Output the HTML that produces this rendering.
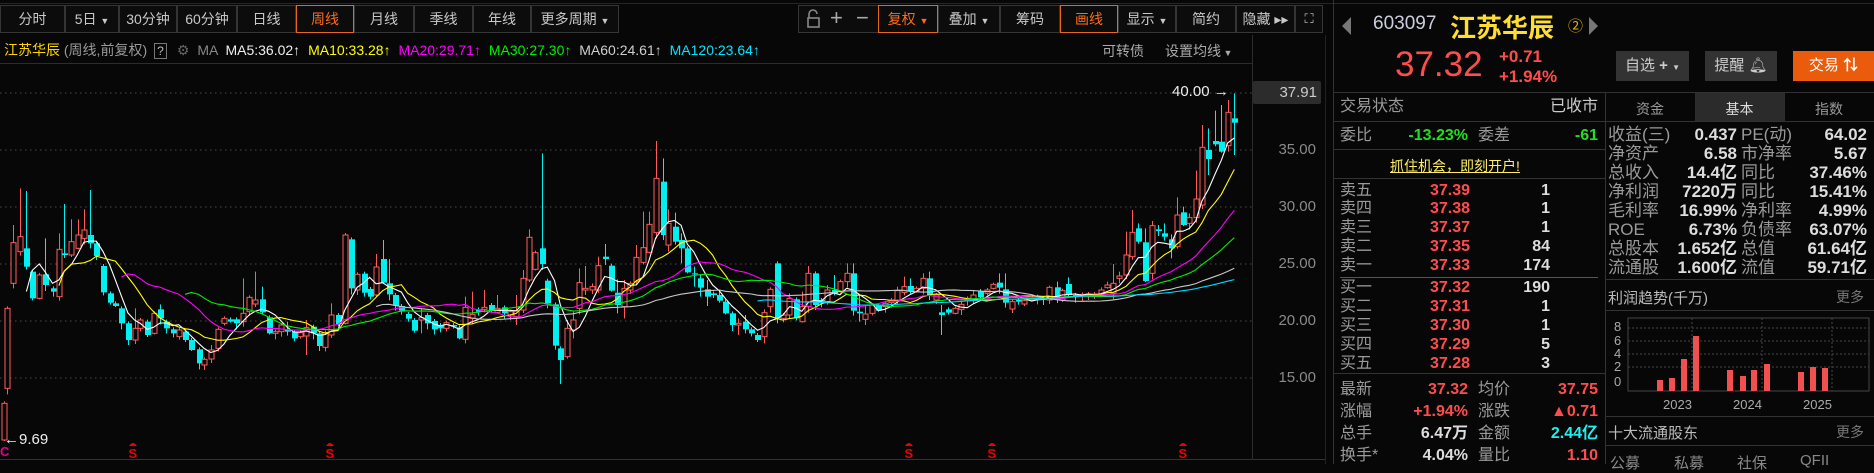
<!DOCTYPE html>
<html><head><meta charset="utf-8">
<style>
*{margin:0;padding:0;box-sizing:border-box}
body{width:1874px;height:464px;background:#070707;overflow:hidden;position:relative;font-family:"Liberation Sans","Noto Sans CJK SC",sans-serif;color:#bbb}
.a{position:absolute;white-space:nowrap}
.btn{position:absolute;top:5px;height:28px;border:1px solid #353535;color:#c8c8c8;font-size:14px;line-height:26px;text-align:center;background:#0c0c0c}
.on{border-color:#e8671d;color:#ff6a1a}
.l{color:#9a9a9a;font-size:16px;line-height:20px}
.r{color:#ff4d4d;font-size:16px;font-weight:bold;text-align:right;line-height:20px}
.w{color:#ddd;font-size:16px;font-weight:bold;text-align:right;line-height:20px}
.hl{position:absolute;height:1px;background:#2c2c2c}
.vl{position:absolute;width:1px;background:#2c2c2c}
</style></head><body>
<div class="hl" style="left:0;top:3px;width:1874px;background:#262626"></div>
<!-- toolbar -->
<div class="btn" style="left:0;width:65px">分时</div>
<div class="btn" style="left:65px;width:54px">5日 <span style="font-size:9px">▼</span></div>
<div class="btn" style="left:119px;width:58px">30分钟</div>
<div class="btn" style="left:177px;width:60px">60分钟</div>
<div class="btn" style="left:237px;width:59px">日线</div>
<div class="btn on" style="left:296px;width:58px">周线</div>
<div class="btn" style="left:354px;width:60px">月线</div>
<div class="btn" style="left:414px;width:59px">季线</div>
<div class="btn" style="left:473px;width:58px">年线</div>
<div class="btn" style="left:531px;width:88px">更多周期 <span style="font-size:9px">▼</span></div>
<div class="btn" style="left:798px;width:80px;border-right:none"></div>
<svg class="a" style="left:804px;top:9px" width="20" height="20" viewBox="0 0 20 20"><path d="M5 9V5a4 4 0 0 1 8 0" fill="none" stroke="#888" stroke-width="1.6"/><rect x="4" y="9" width="11" height="9" fill="none" stroke="#888" stroke-width="1.6"/></svg>
<div class="a" style="left:830px;top:5px;font-size:22px;color:#aaa">+</div>
<div class="a" style="left:856px;top:5px;font-size:22px;color:#aaa">−</div>
<div class="btn on" style="left:878px;width:60px">复权 <span style="font-size:9px">▼</span></div>
<div class="btn" style="left:938px;width:62px">叠加 <span style="font-size:9px">▼</span></div>
<div class="btn" style="left:1000px;width:60px">筹码</div>
<div class="btn on" style="left:1060px;width:58px">画线</div>
<div class="btn" style="left:1118px;width:58px">显示 <span style="font-size:9px">▼</span></div>
<div class="btn" style="left:1176px;width:60px">简约</div>
<div class="btn" style="left:1236px;width:59px">隐藏 ▸▸</div>
<div class="btn" style="left:1295px;width:28px;font-size:13px">⛶</div>
<!-- info row -->
<div class="a" style="left:4px;top:41px;font-size:14px;line-height:18px">
<span style="color:#ffd700">江苏华辰</span> <span style="color:#999">(周线,前复权)</span>
<span style="display:inline-block;border:1px solid #777;color:#bbb;width:13px;height:16px;text-align:center;font-size:12px;line-height:14px;margin-left:3px">?</span>
<span style="color:#666;margin-left:6px">⚙</span> <span style="color:#888;margin-left:4px">MA</span>
<span style="color:#eee;margin-left:4px">MA5:36.02↑</span>
<span style="color:#ffff00;margin-left:4px">MA10:33.28↑</span>
<span style="color:#ff00ff;margin-left:4px">MA20:29.71↑</span>
<span style="color:#00ee00;margin-left:4px">MA30:27.30↑</span>
<span style="color:#cfcfcf;margin-left:4px">MA60:24.61↑</span>
<span style="color:#00e5ff;margin-left:4px">MA120:23.64↑</span>
</div>
<div class="a" style="left:1102px;top:41px;font-size:14px;color:#aaa">可转债</div>
<div class="a" style="left:1165px;top:41px;font-size:14px;color:#aaa">设置均线<span style="font-size:9px"> ▼</span></div>
<div class="hl" style="left:0;top:63px;width:1252px"></div>
<div class="hl" style="left:0;top:459px;width:1325px;background:#333"></div>
<div class="vl" style="left:1252px;top:35px;height:425px"></div>
<div class="vl" style="left:1325px;top:35px;height:429px;background:#222"></div>
<div class="vl" style="left:1333px;top:0;height:464px;background:#333"></div>
<!-- price axis -->
<div class="a" style="left:1262px;top:84px;font-size:15px;color:#8a8a8a;width:54px;text-align:right">40.00</div>
<div class="a" style="left:1262px;top:141px;font-size:15px;color:#8a8a8a;width:54px;text-align:right">35.00</div>
<div class="a" style="left:1262px;top:198px;font-size:15px;color:#8a8a8a;width:54px;text-align:right">30.00</div>
<div class="a" style="left:1262px;top:255px;font-size:15px;color:#8a8a8a;width:54px;text-align:right">25.00</div>
<div class="a" style="left:1262px;top:312px;font-size:15px;color:#8a8a8a;width:54px;text-align:right">20.00</div>
<div class="a" style="left:1262px;top:369px;font-size:15px;color:#8a8a8a;width:54px;text-align:right">15.00</div>
<div class="a" style="left:1253px;top:81px;width:68px;height:23px;background:#2c2c2c;border-radius:2px;color:#ccc;font-size:15px;line-height:23px;text-align:right;padding-right:4px">37.91</div>
<svg id="ch" class="a" style="left:0;top:0" width="1252" height="464"></svg>
<div class="a" style="left:1172px;top:83px;font-size:15px;color:#eee">40.00 →</div>
<div class="a" style="left:4px;top:431px;font-size:15px;color:#eee">←9.69</div>
<div class="a" style="left:0;top:444px;font-size:13px;color:#e0008a;font-weight:bold">C</div>
<!-- right panel -->
<div class="a" style="left:1342px;top:17px;width:0;height:0;border-top:9px solid transparent;border-bottom:9px solid transparent;border-right:9px solid #777"></div>
<div class="a" style="left:1373px;top:13px;font-size:19px;color:#ccd">603097</div>
<div class="a" style="left:1450px;top:8px;font-size:26px;color:#ffdd33;font-weight:bold">江苏华辰</div>
<div class="a" style="left:1568px;top:15px;font-size:15px;color:#e8b000">②</div>
<div class="a" style="left:1589px;top:17px;width:0;height:0;border-top:9px solid transparent;border-bottom:9px solid transparent;border-left:9px solid #777"></div>
<div class="a" style="left:1395px;top:45px;font-size:35px;color:#ff4d4d">37.32</div>
<div class="a" style="left:1499px;top:47px;font-size:17px;color:#ff4d4d;font-weight:bold">+0.71</div>
<div class="a" style="left:1499px;top:67px;font-size:17px;color:#ff4d4d;font-weight:bold">+1.94%</div>
<div class="a" style="left:1616px;top:51px;width:73px;height:30px;background:#333;color:#ccc;font-size:15px;line-height:30px;text-align:center">自选 <b>+</b> <span style="font-size:8px">▼</span></div>
<div class="a" style="left:1705px;top:51px;width:72px;height:30px;background:#333;color:#ccc;font-size:15px;line-height:30px;text-align:center">提醒 🔔︎</div>
<div class="a" style="left:1793px;top:51px;width:81px;height:30px;background:#ea5b0c;color:#fff;font-size:15px;line-height:30px;text-align:center">交易 <b>⇅</b></div>
<div class="hl" style="left:1333px;top:92px;width:541px;background:#333"></div>
<div class="a l" style="left:1340px;top:97px">交易状态</div>
<div class="a" style="left:1540px;top:97px;width:58px;text-align:right;font-size:16px;line-height:20px;color:#ccc">已收市</div>
<div class="vl" style="left:1605px;top:92px;height:372px;background:#333"></div>
<div class="a" style="left:1695px;top:93px;width:89px;height:28px;background:#2b2b2b"></div>
<div class="a" style="left:1605px;top:99px;width:90px;text-align:center;font-size:14px;color:#999">资金</div>
<div class="a" style="left:1695px;top:99px;width:89px;text-align:center;font-size:14px;color:#ddd">基本</div>
<div class="a" style="left:1784px;top:99px;width:90px;text-align:center;font-size:14px;color:#999">指数</div>
<div class="vl" style="left:1695px;top:93px;height:28px"></div><div class="vl" style="left:1784px;top:93px;height:28px"></div>
<div class="hl" style="left:1333px;top:121px;width:541px;background:#333"></div>
<div class="a l" style="left:1340px;top:126px">委比</div>
<div class="a" style="left:1400px;top:126px;width:68px;text-align:right;font-size:16px;line-height:20px;font-weight:bold;color:#22dd22">-13.23%</div>
<div class="a l" style="left:1478px;top:126px">委差</div>
<div class="a" style="left:1540px;top:126px;width:58px;text-align:right;font-size:16px;line-height:20px;font-weight:bold;color:#22dd22">-61</div>
<div class="hl" style="left:1333px;top:149px;width:272px;background:#333"></div>
<div class="a" style="left:1390px;top:156px;font-size:14px;color:#ffee66;text-decoration:underline">抓住机会，即刻开户!</div>
<div class="hl" style="left:1333px;top:178px;width:272px;background:#333"></div>
<div id="ob"></div>
<div class="hl" style="left:1340px;top:277px;width:258px;background:#555"></div>
<div class="hl" style="left:1333px;top:373px;width:272px;background:#333"></div>
<div class="a l" style="left:1340px;top:380px">最新</div><div class="a r" style="left:1400px;top:380px;width:68px">37.32</div>
<div class="a l" style="left:1478px;top:380px">均价</div><div class="a r" style="left:1530px;top:380px;width:68px">37.75</div>
<div class="a l" style="left:1340px;top:402px">涨幅</div><div class="a r" style="left:1400px;top:402px;width:68px">+1.94%</div>
<div class="a l" style="left:1478px;top:402px">涨跌</div><div class="a r" style="left:1530px;top:402px;width:68px">▲0.71</div>
<div class="a l" style="left:1340px;top:424px">总手</div><div class="a w" style="left:1400px;top:424px;width:68px">6.47万</div>
<div class="a l" style="left:1478px;top:424px">金额</div><div class="a w" style="left:1530px;top:424px;width:68px;color:#22eeee">2.44亿</div>
<div class="a l" style="left:1340px;top:446px">换手*</div><div class="a w" style="left:1400px;top:446px;width:68px">4.04%</div>
<div class="a l" style="left:1478px;top:446px">量比</div><div class="a r" style="left:1530px;top:446px;width:68px">1.10</div>
<div id="fd"></div>
<div class="hl" style="left:1605px;top:279px;width:269px;background:#333"></div>
<div class="a" style="left:1608px;top:287px;font-size:15px;color:#bbb">利润趋势(千万)</div>
<div class="a" style="left:1836px;top:287px;font-size:14px;color:#777">更多</div>
<div class="hl" style="left:1605px;top:310px;width:269px;background:#333"></div>
<svg class="a" style="left:1605px;top:310px" width="269" height="106">
<g fill="#aaa" font-size="13" font-family="Liberation Sans">
<text x="9" y="21">8</text><text x="9" y="35">6</text><text x="9" y="48">4</text><text x="9" y="61">2</text><text x="9" y="76">0</text>
<text x="58" y="99">2023</text><text x="128" y="99">2024</text><text x="198" y="99">2025</text></g>
<g stroke="#444" stroke-dasharray="2,2"><line x1="23" y1="18" x2="264" y2="18"/><line x1="23" y1="31" x2="264" y2="31"/><line x1="23" y1="44" x2="264" y2="44"/><line x1="23" y1="57" x2="264" y2="57"/><line x1="87" y1="8" x2="87" y2="81"/><line x1="157" y1="8" x2="157" y2="81"/><line x1="227" y1="8" x2="227" y2="81"/></g>
<rect x="23" y="8" width="241" height="73" fill="none" stroke="#444"/>
<g fill="#f05050"><rect x="52" y="70" width="6" height="11"/><rect x="64" y="68" width="6" height="13"/><rect x="76" y="49" width="6" height="32"/><rect x="88" y="26" width="6" height="55"/><rect x="122" y="60" width="6" height="21"/><rect x="135" y="66" width="6" height="15"/><rect x="146" y="60" width="6" height="21"/><rect x="159" y="54" width="6" height="27"/><rect x="193" y="62" width="6" height="19"/><rect x="205" y="57" width="6" height="24"/><rect x="217" y="58" width="6" height="23"/></g>
</svg>
<div class="hl" style="left:1605px;top:416px;width:269px;background:#333"></div>
<div class="a" style="left:1608px;top:422px;font-size:15px;color:#bbb">十大流通股东</div>
<div class="a" style="left:1836px;top:422px;font-size:14px;color:#777">更多</div>
<div class="hl" style="left:1605px;top:445px;width:269px;background:#333"></div>
<div class="a" style="left:1610px;top:452px;font-size:15px;color:#888;word-spacing:0">公募</div>
<div class="a" style="left:1674px;top:452px;font-size:15px;color:#888">私募</div>
<div class="a" style="left:1737px;top:452px;font-size:15px;color:#888">社保</div>
<div class="a" style="left:1800px;top:452px;font-size:15px;color:#888">QFII</div>
<script>
(function(){
var ob=[["卖五","37.39","1",191],["卖四","37.38","1",209],["卖三","37.37","1",228],["卖二","37.35","84",247],["卖一","37.33","174",266],["买一","37.32","190",288],["买二","37.31","1",307],["买三","37.30","1",326],["买四","37.29","5",345],["买五","37.28","3",364]];
var h="";ob.forEach(function(r){var t=r[3]-10;h+='<div class="a l" style="left:1340px;top:'+t+'px">'+r[0]+'</div><div class="a r" style="left:1400px;top:'+t+'px;width:70px">'+r[1]+'</div><div class="a w" style="left:1480px;top:'+t+'px;width:70px">'+r[2]+'</div>';});
document.getElementById("ob").innerHTML=h;
var fd=[["收益(三)","0.437","PE(动)","64.02"],["净资产","6.58","市净率","5.67"],["总收入","14.4亿","同比","37.46%"],["净利润","7220万","同比","15.41%"],["毛利率","16.99%","净利率","4.99%"],["ROE","6.73%","负债率","63.07%"],["总股本","1.652亿","总值","61.64亿"],["流通股","1.600亿","流值","59.71亿"]];
h="";fd.forEach(function(r,i){var t=125+i*19;h+='<div class="a l" style="left:1608px;top:'+t+'px;font-size:17px;line-height:20px">'+r[0]+'</div><div class="a w" style="left:1660px;top:'+t+'px;width:77px;font-size:17px;line-height:20px">'+r[1]+'</div><div class="a l" style="left:1741px;top:'+t+'px;font-size:17px;line-height:20px">'+r[2]+'</div><div class="a w" style="left:1790px;top:'+t+'px;width:77px;font-size:17px;line-height:20px">'+r[3]+'</div>';});
document.getElementById("fd").innerHTML=h;

var A=[[10,1030,1140,1],[20,745,985,1],[37,548,670,1,495],[55,530,575,1,385],[74,565,620,0,393],[90,635,715,0],[110,645,715,1],[127,643,675,0,535],[147,685,695,0],[165,568,710,1,520],[180,580,585,0,432],[200,545,585,1,478],[217,525,565,1,478],[235,510,535,1,448],[253,525,550,0,390],[270,550,588,0],[288,618,697,0],[307,700,728,0],[323,730,738,0],[340,745,790,0],[358,790,840,0],[377,805,840,1,745],[393,780,805,1],[412,785,825,0],[430,760,820,1],[448,748,775,0,733],[465,785,805,0],[483,808,820,0],[500,810,830,1],[518,815,840,0],[536,840,870,0],[556,868,910,0],[572,898,915,1],[590,870,897,1,855],[609,808,865,1],[627,775,790,1],[643,778,785,0],[661,778,790,0],[680,760,785,1,655],[698,712,755,1],[715,720,732,1,635],[733,718,757,0,680],[752,772,820,0],[770,815,820,1],[786,795,815,1],[803,810,815,0,785],[822,815,835,0],[840,818,830,1],[858,803,828,1,780,885],[875,800,820,0],[893,820,858,0],[911,818,862,1],[928,765,825,1,730],[946,765,792,0],[965,525,790,1],[982,538,685,0],[1000,643,690,1],[1018,641,698,0],[1035,687,710,0],[1053,621,705,1,582],[1071,597,668,0,540],[1089,670,703,0,597],[1106,705,737,0],[1124,738,752,0],[1141,762,776,0],[1160,780,812,0],[1178,773,780,1,745,820],[1196,765,790,0],[1214,783,808,0],[1232,795,805,0],[1250,788,805,1],[1267,795,800,0],[1285,802,835,0],[1303,742,838,1,710,850],[1321,763,775,1,695],[1338,748,755,0],[1356,742,748,1,690],[1374,735,752,0],[1391,745,757,1,705],[1410,742,760,0],[1428,755,765,1],[1445,752,770,1,705,795],[1463,655,750,1,630],[1480,532,660,1,508],[1498,578,628,1]];
var B=[[5,565,612,0,280],[20,662,730,0],[40,733,857,0],[56,865,900,0,0,972],[73,805,890,1,780],[91,780,810,1,755,835],[108,668,745,1,625],[125,685,690,1,618],[143,680,690,1,670],[160,617,690,1,590],[178,590,597,0,552,615],[196,617,692,0],[213,698,735,0,658,760],[230,685,740,1,660,775],[248,670,690,1],[265,592,665,1,555],[284,563,607,1,455],[300,493,577,1,455],[318,355,518,1,243],[337,365,525,0,295],[353,490,555,1,448,575],[370,500,545,0,458],[388,540,565,0,520,610],[405,565,637,0],[423,640,642,0,620,680],[441,655,683,0,645,710],[458,688,710,0,660,738],[475,700,705,0],[493,705,722,0,690],[510,725,760,0],[528,760,795,0],[545,790,795,1,775,825],[563,785,808,0,765],[581,808,820,0],[598,825,840,0],[615,758,830,1,748,850],[633,688,740,1],[651,610,775,0],[668,765,775,1],[686,715,765,1,700],[703,718,775,0],[720,740,785,1,695],[738,640,740,1,618],[755,640,735,0],[773,720,730,0],[790,690,725,1,675],[808,690,700,0,645],[825,665,695,1],[843,640,665,1,610],[860,640,752,0,610],[878,755,760,0,705,785],[895,762,778,1,735,795],[912,735,760,1],[930,735,752,0],[948,730,740,1],[965,720,728,1],[983,692,722,1,680],[1000,680,697,1,650],[1018,678,695,0,655],[1035,685,695,1],[1052,655,685,1,640],[1070,655,705,0,635],[1088,705,720,1],[1104,757,765,0,735,825],[1122,748,758,0],[1140,745,760,1],[1157,733,748,1,725,765],[1175,715,722,1],[1192,705,720,1,690],[1210,693,712,0],[1228,690,700,1],[1245,673,685,1,668],[1262,668,683,0,640]];
var C=[[15,628,668,0,580],[35,665,687,1],[55,660,665,0],[73,662,672,1],[95,655,660,1],[112,650,655,1],[130,655,660,0],[147,622,660,1,617],[170,622,660,0,605],[187,632,660,1],[205,612,645,0,592],[225,645,650,0],[245,643,648,1],[263,642,648,1],[283,642,648,1],[302,630,643,1,622],[322,615,623,1,605],[340,610,640,1,552],[358,588,595,1,575],[378,525,585,1,455],[397,457,530,1,390],[415,445,485,0,430],[436,487,603,0,445],[455,437,580,1,423],[473,448,453,0,435],[493,460,470,0,430],[512,478,505,0,463,535],[530,405,500,1,352],[549,397,435,0,380],[568,413,430,1,400],[587,357,413,1,272],[606,202,375,1,135],[625,210,237,0,145,285],[646,183,193,0,92],[664,185,215,0,75],[683,97,197,1,60],[703,115,128,0,40,225]];
var K=[];
function add(arr,fx,fy){arr.forEach(function(d){var o={x:fx(d[0]),t:fy(d[1]),b:fy(d[2]),c:d[3],h:d[4]?fy(d[4]):null,l:d[5]?fy(d[5]):null};K.push(o);});}
add(A,function(z){return z/2.8},function(z){return 60+z/3});
add(B,function(z){return 540+z/2.75},function(z){return 60+z/3});
add(C,function(z){return 1000+z/3},function(z){return 80+z/3});
var s='';
[93,150,207,264,321,378].forEach(function(y){s+='<line x1="0" y1="'+y+'" x2="1252" y2="'+y+'" stroke="#4a4a4a" stroke-dasharray="1.5,3.5"/>';});
var RED="#ff5b5b",CY="#00f0f0";
K.forEach(function(k,i){
 var hi=k.h!=null?k.h:k.t-(2+(i*7)%7);
 var lo=k.l!=null?k.l:k.b+(1+(i*5)%6);
 var x=Math.round(k.x)+0.5,col=k.c?RED:CY,bh=Math.max(1,k.b-k.t);
 s+='<line x1="'+x+'" y1="'+hi+'" x2="'+x+'" y2="'+lo+'" stroke="'+col+'" stroke-width="1"/>';
 if(k.c){s+='<rect x="'+(x-2.5)+'" y="'+k.t+'" width="5" height="'+bh+'" fill="#070707" stroke="'+col+'" stroke-width="1"/>';}
 else{s+='<rect x="'+(x-2.5)+'" y="'+k.t+'" width="6" height="'+bh+'" fill="'+col+'"/>';}
});
var cl=K.map(function(k){return k.c?k.t:k.b;});
[[5,"#ffffff"],[10,"#ffff00"],[20,"#ff00ff"],[30,"#00ee00"],[60,"#c8c8c8"],[120,"#00d8ff"]].forEach(function(m){
 var n=m[0],pts=[];
 for(var i=n-1;i<K.length;i++){var sm=0;for(var j=i-n+1;j<=i;j++)sm+=cl[j];pts.push(K[i].x.toFixed(1)+','+(sm/n).toFixed(1));}
 s+='<polyline points="'+pts.join(' ')+'" fill="none" stroke="'+m[1]+'" stroke-width="1.1"/>';
});
[133,330,909,992,1183].forEach(function(x){s+='<path d="M'+(x-4)+' 446 Q'+x+' 440 '+(x+4)+' 446 Z" fill="#e00"/><text x="'+(x-4.5)+'" y="458" fill="#e00" font-size="13" font-weight="bold" font-family="Liberation Sans">S</text>';});
document.getElementById("ch").innerHTML=s;
})();
</script>
</body></html>
